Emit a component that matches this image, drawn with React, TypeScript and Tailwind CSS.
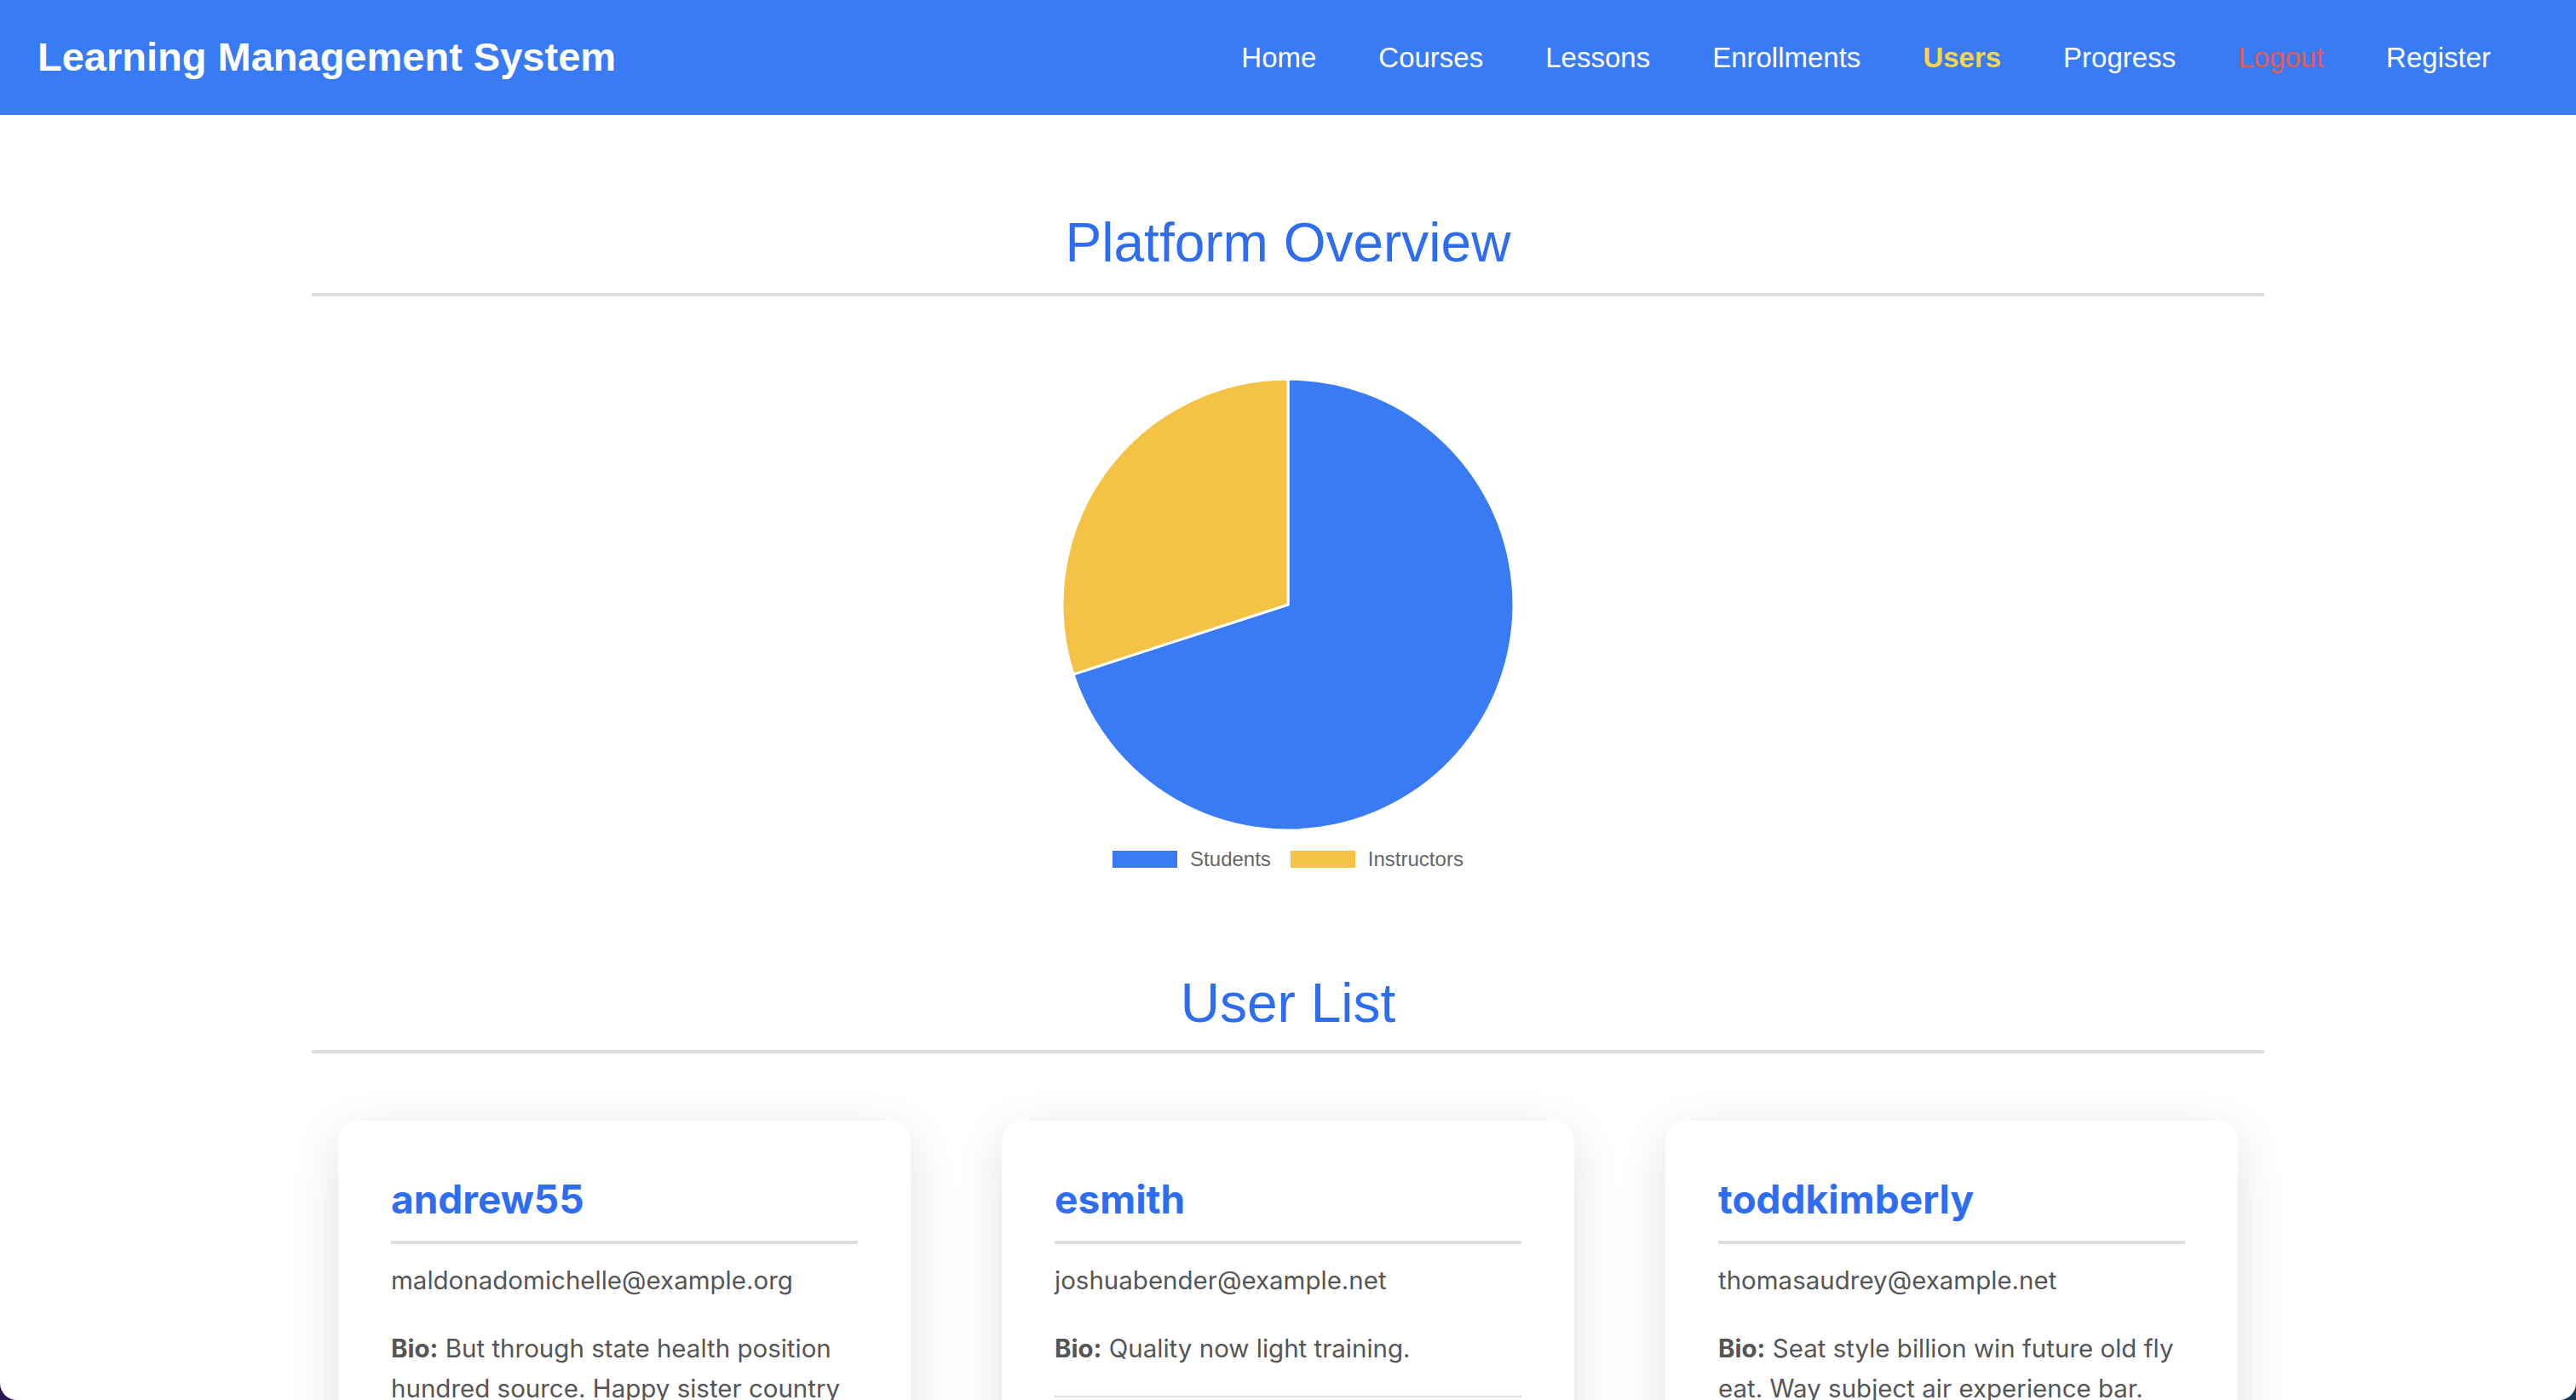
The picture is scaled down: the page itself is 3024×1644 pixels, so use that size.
import React from 'react';

const navItems = [
    { id: 1, title: 'Home', color: 'text-white' },
    { id: 2, title: 'Courses', color: 'text-white' },
    { id: 3, title: 'Lessons', color: 'text-white' },
    { id: 4, title: 'Enrollments', color: 'text-white' },
    { id: 5, title: 'Users', color: 'text-[#fad44a] font-bold' },
    { id: 6, title: 'Progress', color: 'text-white' },
    { id: 7, title: 'Logout', color: 'text-[#e85a4f]' },
    { id: 8, title: 'Register', color: 'text-white' },
];

const users = [
    {
        id: 1,
        username: 'andrew55',
        email: 'maldonadomichelle@example.org',
        bio: 'But through state health position hundred source. Happy sister country still night.',
    },
    {
        id: 2,
        username: 'esmith',
        email: 'joshuabender@example.net',
        bio: 'Quality now light training.',
    },
    {
        id: 3,
        username: 'toddkimberly',
        email: 'thomasaudrey@example.net',
        bio: 'Seat style billion win future old fly eat. Way subject air experience bar.',
    },
];

const helv = { fontFamily: '"Liberation Sans", Arial, sans-serif' };
const inter = { fontFamily: 'Inter, "Noto Sans", sans-serif' };

// students 70% / instructors 30%, chart starts at 12 o'clock
const PieChart = () => (
    <svg width="534" height="534" viewBox="-2 -2 534 534">
        <path d="M265 265 L265 0 A265 265 0 1 1 12.97 346.89 Z" fill="#387bf5" stroke="#ffffff" strokeWidth="3" strokeLinejoin="round" />
        <path d="M265 265 L12.97 346.89 A265 265 0 0 1 265 0 Z" fill="#f4c245" stroke="#ffffff" strokeWidth="3" strokeLinejoin="round" />
    </svg>
);

const SectionTitle = ({ children, pb }: { children: React.ReactNode; pb: string }) => (
    <h2 className={`text-center text-[64px] leading-[77px] text-[#2f6df0] border-b-4 border-[#dddddd] ${pb}`} style={helv}>
        {children}
    </h2>
);

const App = () => {
    return (
        <div className="h-screen overflow-hidden bg-gradient-to-r from-[#2a1650] to-[#163a52]">
            <div className="h-full overflow-hidden bg-white rounded-b-[20px]">
                {/* Header */}
                <header className="h-[135px] bg-[#387bf5] flex items-center justify-between pl-[44px] pr-[100px]">
                    <h1 className="text-white font-bold text-[47px]" style={helv}>Learning Management System</h1>
                    <nav>
                        <ul className="flex items-center gap-[73px] text-[33px]" style={helv}>
                            {navItems.map(item => (
                                <li key={item.id} className={item.color}>{item.title}</li>
                            ))}
                        </ul>
                    </nav>
                </header>

                <main className="w-[2292px] mx-auto">
                    {/* Overview */}
                    <section className="pt-[112px]">
                        <SectionTitle pb="pb-[20px]">Platform Overview</SectionTitle>
                        <div className="flex flex-col items-center pt-[95px]">
                            <PieChart />
                            <div className="flex items-center gap-[23px] mt-[14px] text-[24px] text-[#666666]" style={helv}>
                                <div className="flex items-center gap-[15px]">
                                    <span className="w-[76px] h-[20px] bg-[#387bf5]" />
                                    <span>Students</span>
                                </div>
                                <div className="flex items-center gap-[15px]">
                                    <span className="w-[76px] h-[20px] bg-[#f4c245]" />
                                    <span>Instructors</span>
                                </div>
                            </div>
                        </div>
                    </section>

                    {/* User list */}
                    <section className="pt-[113px]">
                        <SectionTitle pb="pb-[16px]">User List</SectionTitle>
                        <div className="grid grid-cols-3 gap-[107px] px-[31px] pt-[79px]">
                            {users.map(user => (
                                <div key={user.id} className="bg-white rounded-[24px] shadow-[0_16px_60px_rgba(0,0,0,0.12)] px-[62px] pt-[64px] pb-[60px]" style={inter}>
                                    <h3 className="text-[46px] leading-[56px] font-bold text-[#2f6df0] pb-[21px] border-b-4 border-[#dddddd]">{user.username}</h3>
                                    <p className="mt-[19px] text-[29.5px] leading-[46px] text-[#555555]">{user.email}</p>
                                    <p className="mt-[34px] text-[29.5px] leading-[47px] text-[#555555]">
                                        <strong className="font-bold">Bio:</strong> {user.bio}
                                    </p>
                                    <div className="mt-[32px] border-t-2 border-[#dddddd] pt-[30px] text-[28px] text-[#555555]">
                                        Role: Student
                                    </div>
                                </div>
                            ))}
                        </div>
                    </section>
                </main>
            </div>
        </div>
    );
};

export default App;
